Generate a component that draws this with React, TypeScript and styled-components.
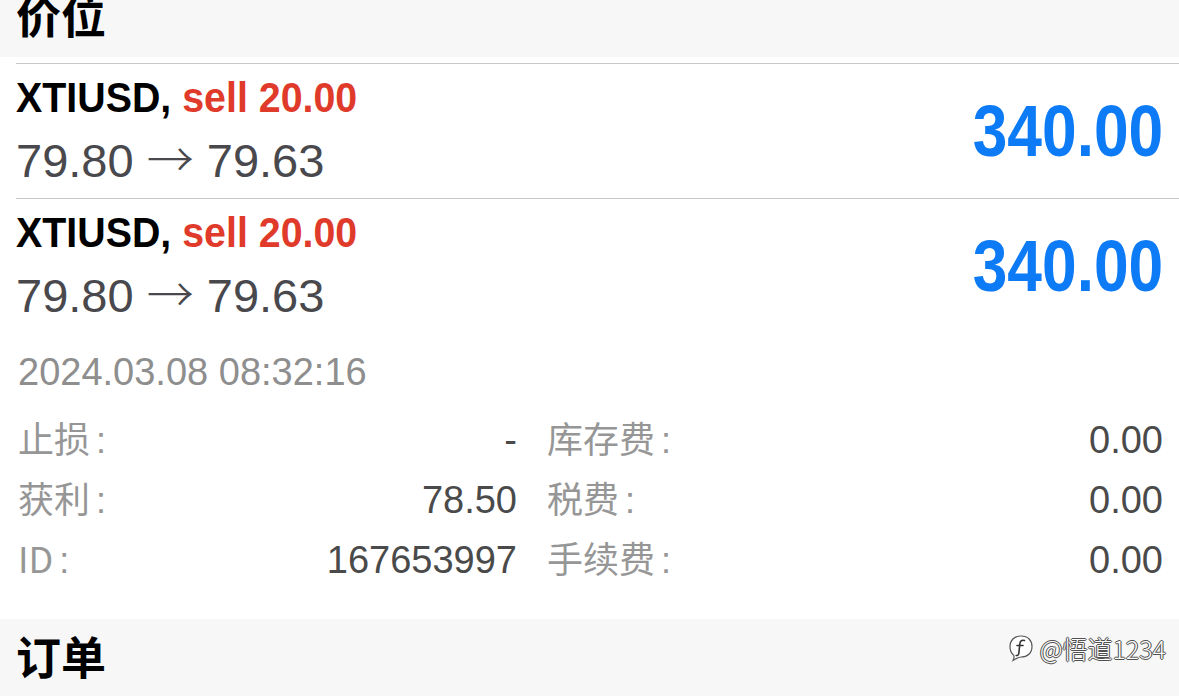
import React from "react";
import styled, { createGlobalStyle } from "styled-components";

const Global = createGlobalStyle`
  html, body { margin: 0; padding: 0; background: #ffffff; }
  body { font-family: "Liberation Sans", "Noto Sans CJK SC", sans-serif; overflow: hidden; }
  * { box-sizing: border-box; }
`;

const Page = styled.div`
  position: relative;
  width: 1179px;
  height: 696px;
  overflow: hidden;
  background: #ffffff;
`;

const SectionBand = styled.div<{ $top?: boolean }>`
  background: #f7f7f7;
  display: flex;
  align-items: ${(p) => (p.$top ? "flex-end" : "flex-start")};
  height: ${(p) => (p.$top ? "57px" : "77px")};
  padding: ${(p) => (p.$top ? "0 16px 20px" : "14px 16px 0")};
  overflow: hidden;
`;

const SectionTitle = styled.div`
  font-family: "Noto Sans CJK SC", sans-serif;
  font-weight: 700;
  font-size: 45px;
  line-height: 45px;
  color: #000;
  flex-shrink: 0;
`;

const List = styled.div`
  padding: 6px 0 0 16px;
`;

const Row = styled.div`
  border-top: 1px solid #c8c7cc;
  padding: 4px 16px 4px 0;
`;

const RowMain = styled.div`
  display: flex;
  align-items: center;
  justify-content: space-between;
  height: 126px;
`;

const Left = styled.div`
  display: flex;
  flex-direction: column;
`;

const TitleLine = styled.div`
  font-weight: 700;
  font-size: 42px;
  line-height: 60px;
  height: 60px;
  white-space: nowrap;
  transform: scaleX(0.937);
  transform-origin: left center;
  color: #000;
`;

const Sell = styled.span`
  color: #e03a2b;
`;

const PriceLine = styled.div`
  font-size: 47px;
  line-height: 66px;
  height: 66px;
  color: #48484d;
  white-space: nowrap;
`;

const Arrow = styled.span`
  font-family: "Noto Sans CJK SC", sans-serif;
  font-weight: 300;
  line-height: 0;
`;

const Amount = styled.div`
  font-weight: 700;
  font-size: 72px;
  line-height: 72px;
  color: #0d7bf5;
  transform: scaleX(0.865);
  transform-origin: right center;
  white-space: nowrap;
`;

const DateLine = styled.div`
  font-size: 38px;
  line-height: 48px;
  color: #8e8e8e;
  margin-top: 19px;
  padding-left: 2px;
`;

const Details = styled.div`
  display: grid;
  grid-template-columns: 499px 1fr;
  column-gap: 30px;
  margin-top: 11px;
  padding: 0 0 28px 2px;
`;

const Cell = styled.div`
  display: flex;
  justify-content: space-between;
  align-items: baseline;
  height: 60px;
  line-height: 60px;
`;

const Label = styled.span`
  font-family: "Noto Sans CJK SC", sans-serif;
  font-size: 36px;
  color: #969696;
`;

const Colon = styled.span`
  font-family: "Liberation Sans", sans-serif;
  margin-left: 6px;
`;

const Value = styled.span`
  font-size: 38px;
  color: #4a4a4a;
`;

const Watermark = styled.div`
  position: absolute;
  right: 13px;
  bottom: 30px;
  display: flex;
  align-items: center;
  gap: 6px;
  font-family: "Noto Sans CJK SC", sans-serif;
  font-weight: 300;
  font-size: 25px;
  color: #ffffff;
  text-shadow: 0 0 1px #333, 1px 0 0 #555, -1px 0 0 #555, 0 1px 0 #555, 0 -1px 0 #555;
`;

type Order = { symbol: string; side: string; from: string; to: string; amount: string };

const orders: Order[] = [
  { symbol: "XTIUSD,", side: "sell 20.00", from: "79.80", to: "79.63", amount: "340.00" },
  { symbol: "XTIUSD,", side: "sell 20.00", from: "79.80", to: "79.63", amount: "340.00" },
];

const details: [string, string, string, string][] = [
  ["止损", "-", "库存费", "0.00"],
  ["获利", "78.50", "税费", "0.00"],
  ["ID", "167653997", "手续费", "0.00"],
];

const OrderRow = ({ o, children }: { o: Order; children?: React.ReactNode }) => (
  <Row>
    <RowMain>
      <Left>
        <TitleLine>
          {o.symbol} <Sell>{o.side}</Sell>
        </TitleLine>
        <PriceLine>
          {o.from} <Arrow>→</Arrow> {o.to}
        </PriceLine>
      </Left>
      <Amount>{o.amount}</Amount>
    </RowMain>
    {children}
  </Row>
);

const LogoIcon = () => (
  <svg width="26" height="28" viewBox="0 0 26 28">
    <path
      d="M13 2 C20 2 24 6.5 24 12.5 C24 19 19.5 23 13 23 C10 23 8 25 5 26.5 C6 24.5 6.5 22.5 5.5 21 C3 19 2 16 2 12.5 C2 6.5 6 2 13 2 Z"
      fill="#fff"
      stroke="#555"
      strokeWidth="1.2"
    />
    <path d="M16.5 6.5 C13.5 5.5 12 7.5 11.8 10 L10.8 19.5 C10.6 21 9.5 21.8 8.2 21.5" fill="none" stroke="#333" strokeWidth="1.6" strokeLinecap="round" />
    <path d="M9 11.5 L15 11.5" fill="none" stroke="#333" strokeWidth="1.6" strokeLinecap="round" />
  </svg>
);

export default function App() {
  return (
    <Page>
      <Global />
      <SectionBand $top>
        <SectionTitle>价位</SectionTitle>
      </SectionBand>
      <List>
        <OrderRow o={orders[0]} />
        <OrderRow o={orders[1]}>
          <DateLine>2024.03.08 08:32:16</DateLine>
          <Details>
            {details.map(([l1, v1, l2, v2]) => (
              <React.Fragment key={l1}>
                <Cell>
                  <Label>
                    {l1}
                    <Colon>:</Colon>
                  </Label>
                  <Value>{v1}</Value>
                </Cell>
                <Cell>
                  <Label>
                    {l2}
                    <Colon>:</Colon>
                  </Label>
                  <Value>{v2}</Value>
                </Cell>
              </React.Fragment>
            ))}
          </Details>
        </OrderRow>
      </List>
      <SectionBand>
        <SectionTitle>订单</SectionTitle>
      </SectionBand>
      <Watermark>
        <LogoIcon />
        <span>@悟道1234</span>
      </Watermark>
    </Page>
  );
}
